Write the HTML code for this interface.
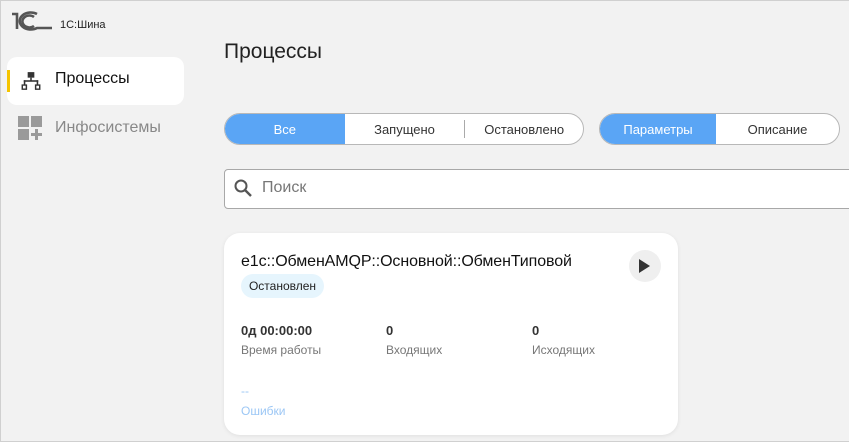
<!DOCTYPE html>
<html><head><meta charset="utf-8"><style>
*{box-sizing:border-box;margin:0;padding:0}
body{width:849px;height:442px;overflow:hidden;background:#f2f2f2;font-family:"Liberation Sans",sans-serif;position:relative}
.abs{position:absolute}
.seg{position:absolute;top:113px;height:32px;border:1px solid #b8b8b8;border-radius:16px;background:#fff;overflow:hidden;display:flex;font-size:13px;color:#333}
.seg div{display:flex;align-items:center;justify-content:center;height:100%}
.seg .on{background:#5aa5f5;color:#fff}
</style></head><body>
<div class="abs" style="left:0;top:0;width:849px;height:442px;border:1px solid #d0d0d0;border-right:none;z-index:9;pointer-events:none"></div>
<svg class="abs" style="left:10px;top:10px" width="44" height="22" viewBox="0 0 44 22"><g fill="none" stroke="#555" stroke-width="2.6"><path d="M2 4h5v15"/><path d="M24 7a7 6 0 1 0 0 9"/><path d="M27 4a11 8.5 0 1 0 0 14h15"/></g></svg>
<div class="abs" style="left:60px;top:19px;font-size:11px;color:#222">1С:Шина</div>
<div class="abs" style="left:7px;top:57px;width:177px;height:48px;background:#fff;border-radius:10px"></div>
<div class="abs" style="left:7px;top:70px;width:3px;height:22px;background:#f5c400"></div>
<svg class="abs" style="left:21px;top:71px" width="20" height="20" viewBox="0 0 18 18" fill="#333"><rect x="6" y="1" width="6" height="5"/><rect x="8.3" y="6" width="1.4" height="3"/><rect x="2.5" y="8.3" width="13" height="1.4"/><rect x="2.5" y="8.3" width="1.4" height="4"/><rect x="14.1" y="8.3" width="1.4" height="4"/><path d="M0.5 12h5v5h-5zM1.8 13.3v2.4h2.4v-2.4zM12.5 12h5v5h-5zM13.8 13.3v2.4h2.4v-2.4z" fill-rule="evenodd"/></svg>
<div class="abs" style="left:55px;top:70px;font-size:16px;color:#111">Процессы</div>
<svg class="abs" style="left:18px;top:116px" width="25" height="25" viewBox="0 0 25 25" fill="#9a9a9a"><rect x="0" y="0" width="11" height="11"/><rect x="13" y="0" width="11" height="11"/><rect x="0" y="13" width="11" height="11"/><rect x="17" y="13" width="3" height="11"/><rect x="13" y="17" width="11" height="3"/></svg>
<div class="abs" style="left:55px;top:119px;font-size:16px;color:#888">Инфосистемы</div>
<div class="abs" style="left:224px;top:40px;font-size:21px;color:#222">Процессы</div>
<div class="seg" style="left:224px;width:360px"><div class="on" style="width:120px">Все</div><div style="width:120px">Запущено</div><div style="width:1px;height:18px;margin-top:6px;background:#aaa"></div><div style="width:118px">Остановлено</div></div>
<div class="seg" style="left:599px;width:241px"><div class="on" style="width:116px">Параметры</div><div style="width:123px">Описание</div></div>
<div class="abs" style="left:224px;top:169px;width:630px;height:40px;background:#fff;border:1px solid #a8a8a8;border-radius:4px"></div>
<svg class="abs" style="left:233px;top:178px" width="22" height="22" viewBox="0 0 22 22"><circle cx="8" cy="8" r="5.5" fill="none" stroke="#555" stroke-width="2"/><path d="M12 12l6 6" stroke="#555" stroke-width="2.4"/></svg>
<div class="abs" style="left:262px;top:179px;font-size:16px;color:#777">Поиск</div>
<div class="abs" style="left:224px;top:233px;width:454px;height:202px;background:#fff;border-radius:16px;box-shadow:0 1px 4px rgba(0,0,0,.08)"></div>
<div class="abs" style="left:241px;top:253px;font-size:16px;color:#111;letter-spacing:-0.1px">e1c::ОбменAMQP::Основной::ОбменТиповой</div>
<div class="abs" style="left:241px;top:274px;width:83px;height:24px;background:#e6f5fd;border-radius:12px;font-size:12px;color:#222;line-height:24px;text-align:center">Остановлен</div>
<div class="abs" style="left:629px;top:250px;width:32px;height:32px;border-radius:50%;background:#efefef"></div>
<svg class="abs" style="left:638px;top:258px" width="14" height="16" viewBox="0 0 14 16"><path d="M1 1l11 7-11 7z" fill="#333"/></svg>
<div class="abs" style="left:241px;top:323px;font-size:13px;font-weight:bold;color:#333">0д 00:00:00</div>
<div class="abs" style="left:386px;top:323px;font-size:13px;font-weight:bold;color:#333">0</div>
<div class="abs" style="left:532px;top:323px;font-size:13px;font-weight:bold;color:#333">0</div>
<div class="abs" style="left:241px;top:343px;font-size:12px;color:#777">Время работы</div>
<div class="abs" style="left:386px;top:343px;font-size:12px;color:#777">Входящих</div>
<div class="abs" style="left:532px;top:343px;font-size:12px;color:#777">Исходящих</div>
<div class="abs" style="left:241px;top:384px;font-size:12px;color:#9cc7f5">--</div>
<div class="abs" style="left:241px;top:404px;font-size:12px;color:#9cc7f5">Ошибки</div>
</body></html>
